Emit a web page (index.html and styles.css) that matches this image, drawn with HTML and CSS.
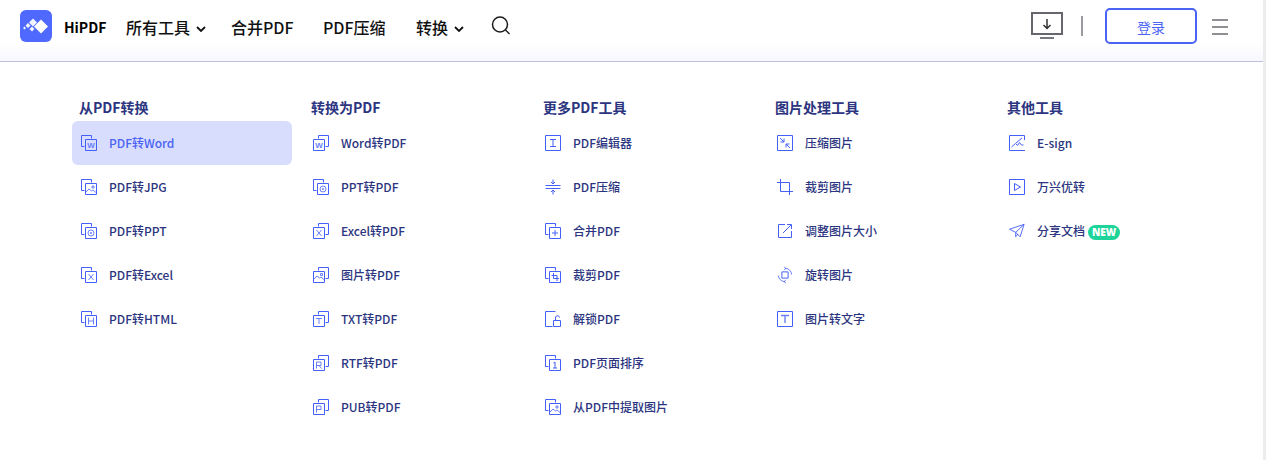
FILE: index.html
```html
<!DOCTYPE html>
<html lang="zh-CN">
<head>
<meta charset="utf-8">
<title>HiPDF</title>
<link rel="stylesheet" href="styles.css">
</head>
<body>
<svg class="defs" width="0" height="0" aria-hidden="true">
  <symbol id="a" viewBox="0 0 16 16"><path d="M10.500 3.500V.5H.5v11h3M4.500 4.500h11v11h-11z" fill="none" stroke="currentColor"/></symbol>
  <symbol id="b" viewBox="0 0 16 16"><path d="M5.500 3.500V.5h10v11h-3M.5 4.500h11v11H.5z" fill="none" stroke="currentColor"/></symbol>
  <symbol id="f" viewBox="0 0 16 16"><path d="M.5.5h15v15H.5z" fill="none" stroke="currentColor"/></symbol>
</svg>
<header class="top">
  <div class="logo"><svg viewBox="0 0 32 32" width="32" height="32"><rect width="32" height="32" rx="6" fill="#4f69ff"/><path d="M21 9.500l7 7-7 7-7-7z" fill="#fff"/><path d="M13 8.500l4 4-4 4-4-4zM8 13l2.500 2.500L8 18l-2.500-2.500zM4.500 16.500l1.500 1.500-1.500 1.500L3 18zM12 16.500l2.500 2.500-2.500 2.500L9.500 19z" fill="#fff" opacity=".92"/></svg></div>
  <span class="brand">HiPDF</span>
  <nav class="nav">
    <a class="nav-a w1">所有工具<svg class="chev" viewBox="0 0 10 6" width="10" height="6"><path d="M1 1l4 4 4-4" fill="none" stroke="#111" stroke-width="1.800"/></svg></a>
    <a class="nav-a w2">合并PDF</a>
    <a class="nav-a w3">PDF压缩</a>
    <a class="nav-a w4">转换<svg class="chev" viewBox="0 0 10 6" width="10" height="6"><path d="M1 1l4 4 4-4" fill="none" stroke="#111" stroke-width="1.800"/></svg></a>
    <svg class="search" viewBox="0 0 20 20" width="20" height="20"><circle cx="9" cy="8.500" r="7.500" fill="none" stroke="#1c1c1c" stroke-width="1.500"/><path d="M14.500 14l4 4" stroke="#1c1c1c" stroke-width="1.500"/></svg>
  </nav>
  <div class="right">
    <svg class="dl" viewBox="0 0 32 28" width="32" height="28"><path d="M1 1h30v21H1z" fill="none" stroke="#66676c" stroke-width="2"/><path d="M16 7v9M12.500 13l3.500 3.500 3.500-3.500" fill="none" stroke="#333" stroke-width="1.500"/><path d="M9 26h14" stroke="#77787d" stroke-width="2"/></svg>
    <span class="sep"></span>
    <button class="login">登录</button>
    <span class="menu"><i></i><i></i><i></i></span>
  </div>
</header>
<main class="panel">
  <section class="col">
    <h3>从PDF转换</h3>
    <a class="item active"><svg class="ic"><use href="#a"/></svg><svg class="ov" viewBox="0 0 16 16"><text x="10" y="12.500" class="g">W</text></svg>PDF转Word</a>
    <a class="item"><svg class="ic"><use href="#a"/></svg><svg class="ov" viewBox="0 0 16 16"><path d="M5 13l3-3 2.500 2 1.500-1 3 2.500M11 7h2v2h-2z" fill="none" stroke="currentColor"/></svg>PDF转JPG</a>
    <a class="item"><svg class="ic"><use href="#a"/></svg><svg class="ov" viewBox="0 0 16 16"><circle cx="10" cy="10" r="3" fill="none" stroke="currentColor"/><circle cx="10" cy="10" r="1" fill="currentColor"/></svg>PDF转PPT</a>
    <a class="item"><svg class="ic"><use href="#a"/></svg><svg class="ov" viewBox="0 0 16 16"><path d="M7.500 7l5 6M12.500 7l-5 6" stroke="currentColor"/></svg>PDF转Excel</a>
    <a class="item"><svg class="ic"><use href="#a"/></svg><svg class="ov" viewBox="0 0 16 16"><path d="M7.500 6.500v7M12.500 6.500v7M7.500 10h5" stroke="currentColor"/></svg>PDF转HTML</a>
  </section>
  <section class="col">
    <h3>转换为PDF</h3>
    <a class="item"><svg class="ic"><use href="#b"/></svg><svg class="ov" viewBox="0 0 16 16"><text x="6" y="12.500" class="g">W</text></svg>Word转PDF</a>
    <a class="item"><svg class="ic"><use href="#a"/></svg><svg class="ov" viewBox="0 0 16 16"><circle cx="10" cy="10" r="3" fill="none" stroke="currentColor"/><circle cx="10" cy="10" r="1" fill="currentColor"/></svg>PPT转PDF</a>
    <a class="item"><svg class="ic"><use href="#b"/></svg><svg class="ov" viewBox="0 0 16 16"><path d="M3.500 7l5 6M8.500 7l-5 6" stroke="currentColor"/></svg>Excel转PDF</a>
    <a class="item"><svg class="ic"><use href="#b"/></svg><svg class="ov" viewBox="0 0 16 16"><path d="M1 12l3-3 2.500 2 1.500-1 3 2.500M7.500 6.500h2v2h-2z" fill="none" stroke="currentColor"/></svg>图片转PDF</a>
    <a class="item"><svg class="ic"><use href="#b"/></svg><svg class="ov" viewBox="0 0 16 16"><path d="M3 7.500h6M6 7.500V13" stroke="currentColor"/></svg>TXT转PDF</a>
    <a class="item"><svg class="ic"><use href="#b"/></svg><svg class="ov" viewBox="0 0 16 16"><path d="M3.500 13.500V7h4.500v3.500H3.500M6 10.500l2.500 3" fill="none" stroke="currentColor"/></svg>RTF转PDF</a>
    <a class="item"><svg class="ic"><use href="#b"/></svg><svg class="ov" viewBox="0 0 16 16"><path d="M3.500 13.500V7h4.500v3.500H3.500" fill="none" stroke="currentColor"/></svg>PUB转PDF</a>
  </section>
  <section class="col">
    <h3>更多PDF工具</h3>
    <a class="item"><svg class="ic"><use href="#f"/></svg><svg class="ov dark" viewBox="0 0 16 16"><path d="M5 4.500h6M5 11.500h6M8 4.500v7" stroke="currentColor"/></svg>PDF编辑器</a>
    <a class="item"><svg class="ic" viewBox="0 0 16 16"><path d="M.5 6.500h15M.5 9.500h15M8 .5v4.500M6 3l2 2 2-2M8 15.500V11M6 13l2-2 2 2" fill="none" stroke="currentColor"/></svg>PDF压缩</a>
    <a class="item"><svg class="ic"><use href="#a"/></svg><svg class="ov dark" viewBox="0 0 16 16"><path d="M7 10h6M10 7v6" stroke="currentColor"/></svg>合并PDF</a>
    <a class="item"><svg class="ic"><use href="#a"/></svg><svg class="ov dark" viewBox="0 0 16 16"><path d="M8.500 6v5.500H14M6.500 8.500h5.500V14" fill="none" stroke="currentColor"/></svg>裁剪PDF</a>
    <a class="item"><svg class="ic" viewBox="0 0 16 16"><path d="M10.500.5H.5v15h7M8.500 9.500h7v6h-7zM10.500 9.500V7a2 2 0 0 1 4-.5" fill="none" stroke="currentColor"/></svg>解锁PDF</a>
    <a class="item"><svg class="ic"><use href="#a"/></svg><svg class="ov dark" viewBox="0 0 16 16"><path d="M8.500 8l1.500-1v6M8 13h4" fill="none" stroke="currentColor"/></svg>PDF页面排序</a>
    <a class="item"><svg class="ic"><use href="#a"/></svg><svg class="ov" viewBox="0 0 16 16"><path d="M5 13l3-3 2.500 2 1.500-1 3 2.500M11 7h2v2h-2z" fill="none" stroke="currentColor"/></svg>从PDF中提取图片</a>
  </section>
  <section class="col">
    <h3>图片处理工具</h3>
    <a class="item"><svg class="ic"><use href="#f"/></svg><svg class="ov dark" viewBox="0 0 16 16"><path d="M3 3l4 4M7 3.500V7H3.500M13 13L9 9M9 12.500V9h3.500" fill="none" stroke="currentColor"/></svg>压缩图片</a>
    <a class="item"><svg class="ic" viewBox="0 0 16 16"><path d="M3.500 0v12.500H16M0 3.500h12.500V16" fill="none" stroke="currentColor"/></svg>裁剪图片</a>
    <a class="item"><svg class="ic" viewBox="0 0 16 16"><path d="M8 1.500H1.500v13h13V8M6 10l8-8M10 1.500h4.500V6" fill="none" stroke="currentColor"/></svg>调整图片大小</a>
    <a class="item"><svg class="ic" viewBox="0 0 18 18"><path d="M5.500 5.500h7v7h-7z" fill="none" stroke="currentColor" stroke-width="1.100"/><path d="M9 1.500a7.500 7.500 0 0 1 7.500 7M9 16.500a7.500 7.500 0 0 1-7.500-7M8 0l2 1.500-2 2M10 14.500l-2 2 2 1.500" fill="none" stroke="currentColor" stroke-width=".9"/></svg>旋转图片</a>
    <a class="item"><svg class="ic"><use href="#f"/></svg><svg class="ov" viewBox="0 0 16 16"><path d="M4 4.500h8M8 4.500v7.500" stroke="currentColor" stroke-width="1.400"/></svg>图片转文字</a>
  </section>
  <section class="col">
    <h3>其他工具</h3>
    <a class="item"><svg class="ic" viewBox="0 0 16 16"><path d="M15.500 5V.5H.5v15H16M2.500 12l4-3.500 2 2 2-3 2 2.500h2M7 8l6-5" fill="none" stroke="currentColor"/></svg>E-sign</a>
    <a class="item"><svg class="ic"><use href="#f"/></svg><svg class="ov dark" viewBox="0 0 16 16"><path d="M5.500 4.500l6 3.500-6 3.500z" fill="none" stroke="currentColor"/></svg>万兴优转</a>
    <a class="item"><svg class="ic" viewBox="0 0 18 16"><path d="M.5 6L17 .5l-4.500 14-5-5zM17 .5L7.500 9.500V14.500l2.500-3" fill="none" stroke="currentColor"/></svg>分享文档<span class="new">NEW</span></a>
  </section>
</main>
</body>
</html>
```

FILE: styles.css
```css
* { box-sizing: border-box; }
html, body { margin: 0; padding: 0; }
body {
  width: 1266px;
  height: 460px;
  overflow: hidden;
  background: #fff;
  font-family: "Noto Sans CJK SC", "Noto Sans", sans-serif;
  border-right: 3px solid #ececec;
}
.defs { position: absolute; }
.top {
  height: 62px;
  display: flex;
  align-items: center;
  padding: 0 35px 0 20px;
  border-bottom: 1px solid #bfbedd;
  background: linear-gradient(#fff 70%, #f6f7ff);
}
.logo { width: 32px; height: 32px; margin-top: -10px; }
.logo svg { display: block; }
.brand {
  margin-left: 12px;
  font: 700 14px/20px "Noto Sans CJK SC", sans-serif;
  color: #000;
  margin-top: -8px;
  width: 62px;
}
.nav { display: flex; align-items: center; margin-top: -8px; }
.nav-a {
  font-size: 16px;
  font-weight: 500;
  line-height: 24px;
  color: #111;
  display: flex;
  align-items: center;
}
.chev { margin: 5px 0 0 6px; }
.w1 { width: 105px; }
.w2 { width: 92px; }
.w3 { width: 93px; }
.w4 { width: 75px; }
.search { margin-top: -2px; }
.right { margin-left: auto; display: flex; align-items: center; margin-top: -10px; }
.dl { display: block; }
.sep { width: 2px; height: 20px; background: #9a9a9f; margin: 0 22px 0 18px; }
.login {
  width: 92px;
  height: 36px;
  border: 2px solid #4a63f5;
  border-radius: 5px;
  background: #fff;
  color: #4a63f5;
  font: 400 14px/20px "Noto Sans CJK SC", sans-serif;
  padding: 2px 0 0;
}
.menu { display: flex; flex-direction: column; gap: 5px; margin: 2px 0 0 15px; width: 16px; }
.menu i { display: block; height: 2px; background: #909094; }
.panel { display: flex; padding: 35px 0 0 72px; }
.col { width: 232px; }
.col h3 {
  margin: 0;
  padding-left: 7px;
  font-size: 14px;
  font-weight: 700;
  line-height: 20px;
  height: 24px;
  color: #2c3580;
}
.item {
  position: relative;
  width: 220px;
  height: 44px;
  display: flex;
  align-items: center;
  padding: 0 0 2px 9px;
  font-size: 12px;
  font-weight: 500;
  color: #2c3580;
  border-radius: 6px;
}
.item.active { background: #d9ddfd; color: #4a63f5; }
.ic { width: 16px; height: 16px; margin: 2px 12px 0 0; color: #4560f8; flex: none; overflow: visible; }
.ov { position: absolute; left: 9px; top: 14px; width: 16px; height: 16px; color: #6a80fa; }
.ov.dark { color: #4560f8; }
.g { font: 700 8px "Liberation Sans", sans-serif; fill: currentColor; text-anchor: middle; }
.new {
  margin: 4px 0 0 3px;
  width: 32px;
  height: 15px;
  border-radius: 8px;
  background: #1fd49a;
  color: #fff;
  font: 900 10px/15px "Noto Sans", sans-serif;
  text-align: center;
}
```
